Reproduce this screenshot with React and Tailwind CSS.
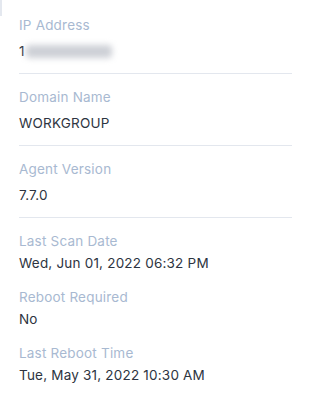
import React from 'react';

const upper = [
  { label: 'IP Address', value: null },
  { label: 'Domain Name', value: 'WORKGROUP' },
  { label: 'Agent Version', value: '7.7.0' },
];

const lower = [
  { label: 'Last Scan Date', value: 'Wed, Jun 01, 2022 06:32 PM' },
  { label: 'Reboot Required', value: 'No' },
  { label: 'Last Reboot Time', value: 'Tue, May 31, 2022 10:30 AM' },
];

// the IP value is blurred out in the original
const BlurredIp = () => (
  <span className="flex items-center h-[20px]">
    <span>1</span>
    <span className="ml-[1px] w-[86px] h-[13px] bg-[#cdd0d6] blur-[3px] rounded-sm"></span>
  </span>
);

const App = () => {
  return (
    <div
      className="relative w-[309px] h-[412px] bg-white overflow-hidden"
      style={{ fontFamily: 'Inter, "Noto Sans", sans-serif' }}
    >
      <div className="absolute left-0 top-0 w-[2px] h-[16px] bg-[#e4e8ef]"></div>
      <div className="pl-[19px] pr-[17px] pt-[15px] text-[13.5px] leading-[20px] tracking-[0.2px]">
        {upper.map((item) => (
          <div key={item.label} className="pb-[12px] mb-[13px] border-b border-[#e3e7ee]">
            <div className="text-[#a8b9d1]">{item.label}</div>
            <div className="mt-[6px] text-[#2d3441]">
              {item.value === null ? <BlurredIp /> : item.value}
            </div>
          </div>
        ))}
        {lower.map((item) => (
          <div key={item.label} className="mb-[14px]">
            <div className="text-[#a8b9d1]">{item.label}</div>
            <div className="mt-[2px] text-[#2d3441]">{item.value}</div>
          </div>
        ))}
      </div>
    </div>
  );
};

export default App;
